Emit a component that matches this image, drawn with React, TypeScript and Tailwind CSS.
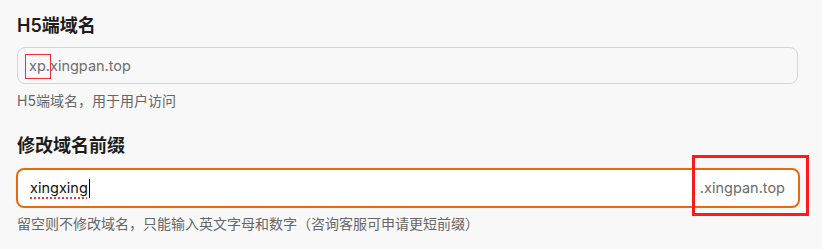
export default function App() {
  return (
    <div
      className="min-h-screen w-full bg-[#f8f8f8] px-[17px] pt-[14px]"
      style={{ fontFamily: 'Inter, "Noto Sans CJK SC", sans-serif' }}
    >
      {/* H5 domain */}
      <h2 className="text-[18px] font-semibold leading-[24px] text-[#1c1c1c]">H5端域名</h2>
      <div className="mt-[9px] flex h-[37px] w-[781px] items-center rounded-[8px] border border-[#d6d6d6] px-[11px] text-[14.5px] text-[#6f6f6f]">
        <span className="relative leading-[22px]">
          <span className="absolute left-[-4px] top-[-1px] h-[25px] w-[26px] border border-[#f03030]" />
          xp.xingpan.top
        </span>
      </div>
      <p className="mt-[7px] text-[14px] leading-[20px] text-[#666]">H5端域名，用于用户访问</p>

      {/* Prefix */}
      <h2 className="mt-[23px] text-[18px] font-semibold leading-[24px] text-[#1c1c1c]">修改域名前缀</h2>
      <div className="relative mt-[10px] ml-[-1px] flex h-[40px] w-[784px] items-center justify-between rounded-[8px] border-2 border-[#e66a0e] bg-white pl-[12px] pr-[13px] text-[14.5px]">
        <span className="flex items-center text-[#111]">
          <span className="underline decoration-[#e53935] decoration-dotted decoration-[1.5px] underline-offset-[4px]">xingxing</span>
          <span className="ml-[1px] h-[19px] w-[1px] bg-black" />
        </span>
        <span className="text-[#6b6b6b]">.xingpan.top</span>
        <span className="absolute left-[674px] top-[-15px] h-[61px] w-[117px] border-[3px] border-[#ff1a1a]" />
      </div>
      <p className="mt-[6px] text-[14px] leading-[20px] text-[#666]">
        留空则不修改域名，只能输入英文字母和数字（咨询客服可申请更短前缀）
      </p>
    </div>
  );
}
